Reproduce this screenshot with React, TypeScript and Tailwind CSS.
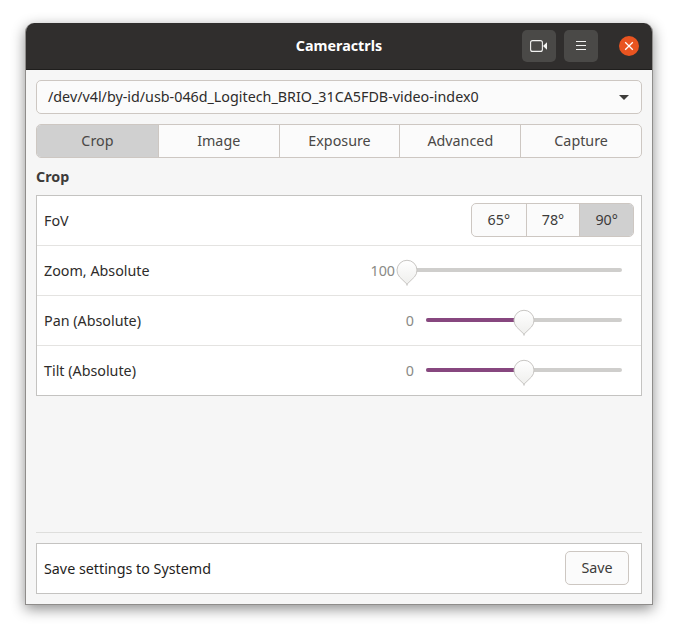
import React from "react";

function Thumb() {
  return (
    <svg width="22" height="27" viewBox="0 0 22 27" className="absolute top-0 left-0">
      <defs>
        <linearGradient id="thumbgrad" x1="0" y1="0" x2="0" y2="1">
          <stop offset="0" stopColor="#ffffff" />
          <stop offset="1" stopColor="#efefed" />
        </linearGradient>
      </defs>
      <path d="M11 25.2 L3.6 18 A10 10 0 1 1 18.4 18 Z" fill="url(#thumbgrad)" stroke="#c8c6c3" strokeWidth="1" strokeLinejoin="round" />
      <path d="M11 25.5 v0.8" stroke="#77746f" strokeWidth="1" />
    </svg>
  );
}

function Slider({ value, fill, thumbLeft }: { value: string; fill: number; thumbLeft: number }) {
  const isZoom = value === "100";
  return (
    <div className="flex items-center h-full">
      <span className={`text-[14.3px] text-[#8a8a86] ${isZoom ? "mr-[0px]" : "mr-[12px]"}`}>{value}</span>
      <div className={`relative h-[27px] ${isZoom ? "w-[227px]" : "w-[196px]"}`}>
        <div className={`absolute top-[11px] right-0 h-[4px] rounded-full bg-[#cfcecc] ${isZoom ? "w-[215px]" : "w-full"}`} />
        {fill > 0 && <div className="absolute top-[11px] left-0 h-[4px] rounded-full bg-[#87477f]" style={{ width: fill }} />}
        <div className="absolute top-[2px] w-[22px] h-[27px]" style={{ left: thumbLeft }}>
          <Thumb />
        </div>
      </div>
    </div>
  );
}

function Row({ label, children, last }: { label: string; children: React.ReactNode; last?: boolean }) {
  return (
    <div className={`flex items-center justify-between pl-[7px] pr-[7px] bg-white ${last ? "h-[49px]" : "h-[50px] border-b border-[#e4e3e1]"}`}>
      <span className="text-[#2e2c2b]">{label}</span>
      {children}
    </div>
  );
}

const tabs = ["Crop", "Image", "Exposure", "Advanced", "Capture"];

export default function App() {
  return (
    <div className="w-[678px] h-[633px] bg-white pt-[23px] pl-[25px] text-[14.3px] font-['Noto_Sans','Open_Sans',sans-serif] overflow-hidden">
      <div className="w-[628px] h-[582px] flex flex-col rounded-t-[9px] bg-[#f6f6f6] border-x border-b border-[#8f8d8b] shadow-[0_4px_14px_rgba(0,0,0,0.45)] overflow-hidden">
        <header className="relative h-[47px] shrink-0 flex items-center justify-end bg-[#302e2d] border-b border-[#1f1e1d]">
          <h1 className="absolute left-0 right-0 text-center text-white font-bold text-[14.3px]">Cameractrls</h1>
          <button className="relative w-[34px] h-[32px] rounded-[5px] bg-[#4a4947] flex items-center justify-center mr-[8px]">
            <svg width="18" height="12" viewBox="0 0 18 12" fill="none">
              <rect x="0.6" y="0.6" width="11.8" height="10.8" rx="2" stroke="#f2f2f1" strokeWidth="1.1" />
              <path d="M13 6 L17 2.2 V9.8 Z" fill="#f2f2f1" />
            </svg>
          </button>
          <button className="relative w-[34px] h-[32px] rounded-[5px] bg-[#4a4947] flex items-center justify-center mr-[21px]">
            <svg width="12" height="10" viewBox="0 0 12 10" fill="none" stroke="#f2f2f1" strokeWidth="1">
              <path d="M1 .5h10M1 4.5h10M1 8.5h10" />
            </svg>
          </button>
          <button className="relative w-[20px] h-[20px] rounded-full bg-[#e95420] flex items-center justify-center mr-[13px]">
            <svg width="10" height="10" viewBox="0 0 10 10" fill="none" stroke="#ffffff" strokeWidth="1.3">
              <path d="M1.2 1.2l7.6 7.6M8.8 1.2L1.2 8.8" />
            </svg>
          </button>
        </header>

        <main className="flex-1 flex flex-col px-[10px] pt-[10px]">
          <div className="h-[34px] shrink-0 flex items-center justify-between pl-[11px] pr-[12px] rounded-[5px] border border-[#cdc7c2] bg-[#fbfbfb] text-[#2e2c2b]">
            <span className="whitespace-nowrap">/dev/v4l/by-id/usb-046d_Logitech_BRIO_31CA5FDB-video-index0</span>
            <span className="w-0 h-0 border-x-[5px] border-x-transparent border-t-[5px] border-t-[#3d3c3a]" />
          </div>

          <div className="mt-[10px] h-[34px] shrink-0 grid grid-cols-5 rounded-[5px] border border-[#cdc7c2] bg-[#fbfbfb] overflow-hidden text-[#4a4846]">
            {tabs.map((t, i) => (
              <div key={t} className={`flex items-center justify-center ${i === 0 ? "bg-[#d0d0d0]" : "border-l border-[#cdc7c2]"}`}>
                {t}
              </div>
            ))}
          </div>

          <h2 className="mt-[9px] h-[20px] leading-[20px] font-bold text-[14.3px] text-[#3d3b3a]">Crop</h2>

          <div className="mt-[8px] shrink-0 border border-[#c4c3c1] flex flex-col">
            <Row label="FoV">
              <div className="w-[163px] h-[34px] mb-[1px] grid grid-cols-3 rounded-[5px] border border-[#cdc7c2] overflow-hidden bg-[#fbfbfb] text-[#3d3b3a]">
                <div className="flex items-center justify-center">65°</div>
                <div className="flex items-center justify-center border-l border-[#cdc7c2]">78°</div>
                <div className="flex items-center justify-center border-l border-[#cdc7c2] bg-[#d0d0d0]">90°</div>
              </div>
            </Row>
            <Row label="Zoom, Absolute">
              <div className="mr-[12px] h-full"><Slider value="100" fill={0} thumbLeft={1} /></div>
            </Row>
            <Row label="Pan (Absolute)">
              <div className="mr-[12px] h-full"><Slider value="0" fill={97} thumbLeft={87} /></div>
            </Row>
            <Row label="Tilt (Absolute)" last>
              <div className="mr-[12px] h-full"><Slider value="0" fill={97} thumbLeft={87} /></div>
            </Row>
          </div>

          <div className="flex-1" />
          <div className="h-px bg-[#dededc] shrink-0" />
          <div className="mt-[10px] mb-[10px] h-[51px] shrink-0 flex items-center justify-between pl-[7px] pr-[12px] bg-white border border-[#c4c3c1]">
            <span className="text-[#1f1e1d]">Save settings to Systemd</span>
            <button className="w-[64px] h-[34px] mb-[1px] rounded-[5px] border border-[#cdc7c2] bg-[#fbfbfb] text-[#3d3b3a]">Save</button>
          </div>
        </main>
      </div>
    </div>
  );
}
